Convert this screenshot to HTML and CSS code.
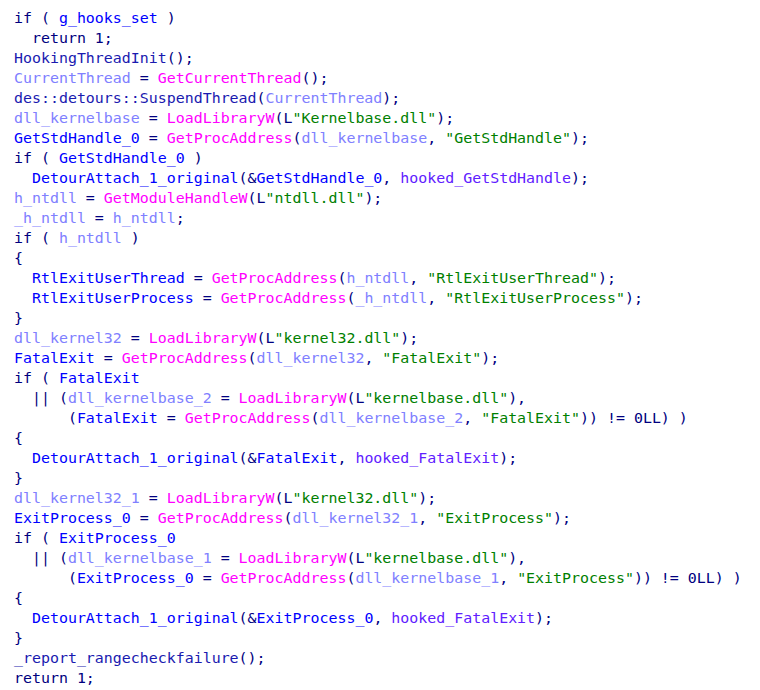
FILE: index.html
```html
<!DOCTYPE html>
<html>
<head>
<meta charset="utf-8">
<link rel="stylesheet" href="styles.css">
</head>
<body>
<div class="code">
<div class="ln">if ( <span class="g">g_hooks_set</span> )</div>
<div class="ln">  return 1;</div>
<div class="ln"><span class="f">HookingThreadInit</span>();</div>
<div class="ln"><span class="l">CurrentThread</span> = <span class="i">GetCurrentThread</span>();</div>
<div class="ln"><span class="f">des::detours::SuspendThread</span>(<span class="l">CurrentThread</span>);</div>
<div class="ln"><span class="l">dll_kernelbase</span> = <span class="i">LoadLibraryW</span>(L<span class="s">"Kernelbase.dll"</span>);</div>
<div class="ln"><span class="g">GetStdHandle_0</span> = <span class="i">GetProcAddress</span>(<span class="l">dll_kernelbase</span>, <span class="s">"GetStdHandle"</span>);</div>
<div class="ln">if ( <span class="g">GetStdHandle_0</span> )</div>
<div class="ln">  <span class="g">DetourAttach_1_original</span>(&amp;<span class="g">GetStdHandle_0</span>, <span class="h">hooked_GetStdHandle</span>);</div>
<div class="ln"><span class="l">h_ntdll</span> = <span class="i">GetModuleHandleW</span>(L<span class="s">"ntdll.dll"</span>);</div>
<div class="ln"><span class="l">_h_ntdll</span> = <span class="l">h_ntdll</span>;</div>
<div class="ln">if ( <span class="l">h_ntdll</span> )</div>
<div class="ln">{</div>
<div class="ln">  <span class="g">RtlExitUserThread</span> = <span class="i">GetProcAddress</span>(<span class="l">h_ntdll</span>, <span class="s">"RtlExitUserThread"</span>);</div>
<div class="ln">  <span class="g">RtlExitUserProcess</span> = <span class="i">GetProcAddress</span>(<span class="l">_h_ntdll</span>, <span class="s">"RtlExitUserProcess"</span>);</div>
<div class="ln">}</div>
<div class="ln"><span class="l">dll_kernel32</span> = <span class="i">LoadLibraryW</span>(L<span class="s">"kernel32.dll"</span>);</div>
<div class="ln"><span class="g">FatalExit</span> = <span class="i">GetProcAddress</span>(<span class="l">dll_kernel32</span>, <span class="s">"FatalExit"</span>);</div>
<div class="ln">if ( <span class="g">FatalExit</span></div>
<div class="ln">  || (<span class="l">dll_kernelbase_2</span> = <span class="i">LoadLibraryW</span>(L<span class="s">"kernelbase.dll"</span>),</div>
<div class="ln">      (<span class="g">FatalExit</span> = <span class="i">GetProcAddress</span>(<span class="l">dll_kernelbase_2</span>, <span class="s">"FatalExit"</span>)) != 0LL) )</div>
<div class="ln">{</div>
<div class="ln">  <span class="g">DetourAttach_1_original</span>(&amp;<span class="g">FatalExit</span>, <span class="h">hooked_FatalExit</span>);</div>
<div class="ln">}</div>
<div class="ln"><span class="l">dll_kernel32_1</span> = <span class="i">LoadLibraryW</span>(L<span class="s">"kernel32.dll"</span>);</div>
<div class="ln"><span class="g">ExitProcess_0</span> = <span class="i">GetProcAddress</span>(<span class="l">dll_kernel32_1</span>, <span class="s">"ExitProcess"</span>);</div>
<div class="ln">if ( <span class="g">ExitProcess_0</span></div>
<div class="ln">  || (<span class="l">dll_kernelbase_1</span> = <span class="i">LoadLibraryW</span>(L<span class="s">"kernelbase.dll"</span>),</div>
<div class="ln">      (<span class="g">ExitProcess_0</span> = <span class="i">GetProcAddress</span>(<span class="l">dll_kernelbase_1</span>, <span class="s">"ExitProcess"</span>)) != 0LL) )</div>
<div class="ln">{</div>
<div class="ln">  <span class="g">DetourAttach_1_original</span>(&amp;<span class="g">ExitProcess_0</span>, <span class="h">hooked_FatalExit</span>);</div>
<div class="ln">}</div>
<div class="ln"><span class="f">_report_rangecheckfailure</span>();</div>
<div class="ln">return 1;</div>
</div>
</body>
</html>
```

FILE: styles.css
```css
html, body {
  margin: 0;
  padding: 0;
  background: #ffffff;
}
.code {
  display: flex;
  flex-direction: column;
  padding: 8px 14px;
  font-family: "DejaVu Sans Mono", "Liberation Mono", monospace;
  font-size: 14.93px;
  line-height: 20px;
  color: #000080;
}
.ln {
  white-space: pre;
  height: 20px;
}
.g { color: #0000ff; }
.f { color: #1a1ab0; }
.l { color: #8080ff; }
.i { color: #ff00ff; }
.s { color: #008000; }
.h { color: #6020ff; }
```
